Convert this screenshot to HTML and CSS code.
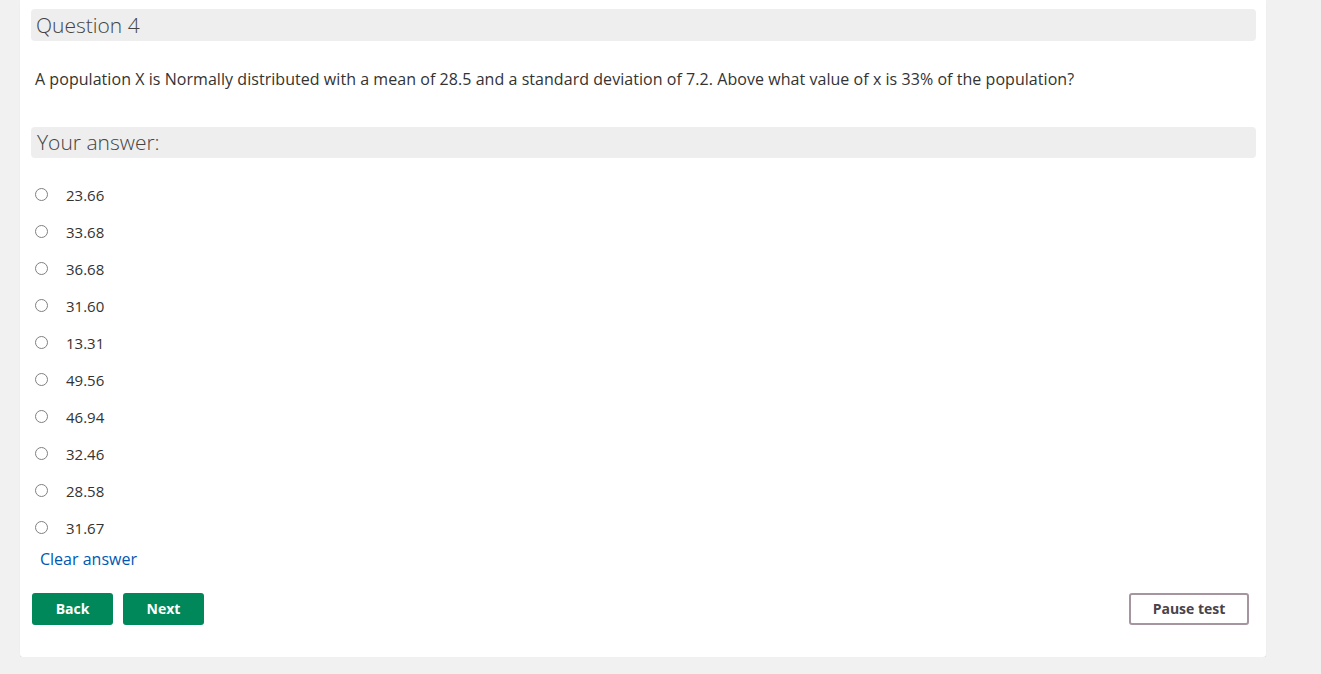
FILE: index.html
```html
<!DOCTYPE html>
<html>
<head>
<meta charset="utf-8">
<link rel="stylesheet" href="styles.css">
</head>
<body>
<div class="card">
  <div class="section-head">Question 4</div>
  <p class="question">A population X is Normally distributed with a mean of 28.5 and a standard deviation of 7.2. Above what value of x is 33% of the population?</p>
  <div class="section-head answer-head">Your answer:</div>
  <ul class="options">
    <li class="option"><span class="radio"></span><span class="label">23.66</span></li>
    <li class="option"><span class="radio"></span><span class="label">33.68</span></li>
    <li class="option"><span class="radio"></span><span class="label">36.68</span></li>
    <li class="option"><span class="radio"></span><span class="label">31.60</span></li>
    <li class="option"><span class="radio"></span><span class="label">13.31</span></li>
    <li class="option"><span class="radio"></span><span class="label">49.56</span></li>
    <li class="option"><span class="radio"></span><span class="label">46.94</span></li>
    <li class="option"><span class="radio"></span><span class="label">32.46</span></li>
    <li class="option"><span class="radio"></span><span class="label">28.58</span></li>
    <li class="option"><span class="radio"></span><span class="label">31.67</span></li>
  </ul>
  <a class="clear" href="#">Clear answer</a>
  <div class="actions">
    <div class="nav">
      <button class="btn btn-primary">Back</button>
      <button class="btn btn-primary">Next</button>
    </div>
    <button class="btn btn-outline">Pause test</button>
  </div>
</div>
</body>
</html>
```
FILE: styles.css
```css
html, body {
  margin: 0;
  padding: 0;
  background: #f1f1f1;
  font-family: "Open Sans", "Liberation Sans", sans-serif;
  color: #333;
}
.card {
  margin-left: 20px;
  width: 1246px;
  box-sizing: border-box;
  background: #fff;
  padding: 9px 10px 32px 11px;
  border-radius: 0 0 3px 3px;
  box-shadow: 0 2px 1px rgba(0,0,0,0.08);
}
.section-head {
  background: #eeeeee;
  border-radius: 4px;
  height: 32px;
  line-height: 32px;
  padding-left: 5px;
  font-size: 21px;
  font-weight: 300;
  color: #444;
}
.answer-head {
  padding-left: 6px;
  height: 31px;
  line-height: 31px;
}
.question {
  margin: 28px 0 37px 4px;
  font-size: 16px;
  letter-spacing: 0.05px;
  line-height: 21px;
  color: #333;
}
.options {
  list-style: none;
  margin: 18px 0 0 0;
  padding: 0;
}
.option {
  display: flex;
  align-items: center;
  height: 37px;
}
.radio {
  width: 11px;
  height: 11px;
  border: 1px solid #808080;
  border-radius: 50%;
  margin-left: 4px;
  background: #fff;
}
.label {
  margin-left: 18px;
  font-size: 15px;
  color: #333;
}
.clear {
  display: block;
  margin: 3px 0 0 9px;
  font-size: 16px;
  line-height: 21px;
  color: #0057b3;
  text-decoration: none;
}
.actions {
  display: flex;
  justify-content: space-between;
  align-items: center;
  margin-top: 23px;
  padding-right: 7px;
}
.nav {
  display: flex;
  gap: 10px;
  margin-left: 1px;
}
.btn {
  font-family: "Open Sans", "Liberation Sans", sans-serif;
  font-size: 14px;
  font-weight: 700;
  height: 32px;
  border-radius: 3px;
  cursor: pointer;
  padding: 0 0 2px 0;
}
.btn-primary {
  width: 81px;
  background: #00885a;
  border: none;
  color: #fff;
}
.btn-outline {
  width: 120px;
  background: #fff;
  border: 2px solid #a6959f;
  color: #4a434a;
}
```
